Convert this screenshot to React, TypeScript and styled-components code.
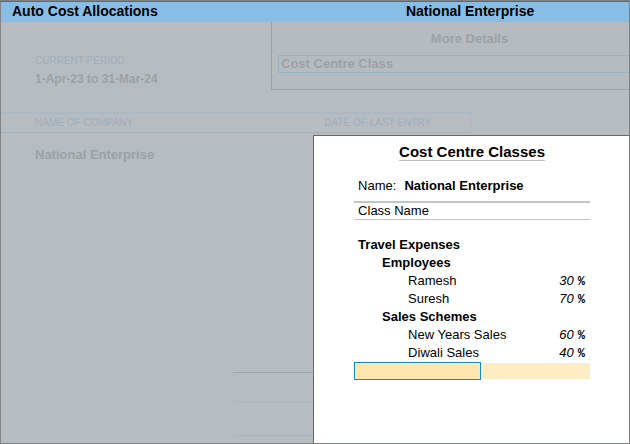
import React from "react";
import styled, { createGlobalStyle } from "styled-components";

const GlobalStyle = createGlobalStyle`
  *, *::before, *::after { box-sizing: border-box; }
  body { margin: 0; background: #b6bbbf; }
  h1, h2, h3, p, dl, dt, dd { margin: 0; font: inherit; }
`;

const Frame = styled.div`
  display: flex;
  flex-direction: column;
  min-height: 100vh;
  border: 1px solid #808284;
  background: #b6bcc0;
  color: #000;
  font-family: "Liberation Sans", Arial, sans-serif;
  font-size: 13px;
  line-height: 18px;
`;

const TitleBar = styled.header`
  display: flex;
  align-items: center;
  height: 21px;
  padding: 0 11px 2px;
  border-top: 1px solid #3c6fa6;
  background: #88bee6;
  font-size: 14px;
  font-weight: bold;
`;

const ScreenName = styled.h1`
  width: 65%;
`;

const CompanyName = styled.p`
  flex: 1;
`;

const Workspace = styled.main`
  position: relative;
  flex: 1;
`;

const Gateway = styled.section`
  width: 75%;
`;

const Faded = styled.p`
  color: #9ca1a5;
  font-weight: bold;
`;

const Period = styled.div`
  height: 92px;
  padding: 30px 34px 0;
  border-bottom: 2px solid #a9bac6;
`;

const Caption = styled.span`
  display: block;
  color: #a0afbc;
  font-size: 10px;
`;

const PeriodValue = styled(Faded)`
  font-size: 12px;
`;

const Columns = styled.div`
  display: flex;
  justify-content: space-between;
  padding: 0 40px 0 34px;
  border-right: 1px solid #adb8c0;
  border-bottom: 1px solid #a5b2ba;
`;

const Company = styled(Faded)`
  padding: 13px 34px;
`;

const MenuRules = styled.div`
  position: absolute;
  left: 37%;
  bottom: 0;
  width: 13%;
`;

const Rule = styled.div<{ $height: number; $tone: string }>`
  height: ${(p) => p.$height}px;
  border-top: 1px solid ${(p) => p.$tone};
`;

const Details = styled.aside`
  position: absolute;
  top: 0;
  left: 43%;
  right: 0;
  padding: 8px 0 16px 6px;
  border-left: 1px solid #9ca4a9;
  border-bottom: 1px solid #9ca4a9;
  background: #b6bbbf;
`;

const DetailsTitle = styled(Faded)`
  padding-right: 40px;
  padding-left: 72px;
  text-align: center;
`;

const DetailsChoice = styled.button`
  display: block;
  width: 100%;
  height: 18px;
  margin-top: 7px;
  padding: 0 2px;
  border: 1px solid #9bb3c3;
  border-right: 0;
  background: transparent;
  color: #9ca1a5;
  font: bold 13px/16px "Liberation Sans", Arial, sans-serif;
  text-align: left;
`;

const Dialog = styled.section`
  position: absolute;
  top: 113px;
  right: 0;
  bottom: 0;
  left: 49.7%;
  padding: 8px 39px 0 40px;
  border-top: 1px solid #66696b;
  border-left: 1px solid #66696b;
  background: #fff;
`;

const DialogTitle = styled.h2`
  width: fit-content;
  margin: 0 auto;
  border-bottom: 1px solid #bcbcbc;
  font-size: 15px;
  font-weight: bold;
  line-height: 16px;
`;

const NameRow = styled.dl`
  display: flex;
  gap: 8px;
  padding: 16px 4px 6px;
`;

const NameLabel = styled.dt``;

const NameValue = styled.dd`
  font-weight: bold;
`;

const ClassTable = styled.table`
  width: 100%;
  border-collapse: separate;
  border-spacing: 0;
`;

const HeadCell = styled.th`
  height: 19px;
  padding: 0 4px;
  border-top: 2px solid #c4c4c4;
  border-bottom: 1px solid #c4c4c4;
  font-weight: normal;
  line-height: 16px;
  text-align: left;
`;

const Gap = styled.td`
  height: 16px;
  padding: 0;
`;

const NameCell = styled.td<{ $level: number }>`
  height: 18px;
  padding: 0 0 0 ${(p) => [4, 28, 54][p.$level]}px;
  font-weight: ${(p) => (p.$level < 2 ? "bold" : "normal")};
  white-space: nowrap;
`;

const ShareCell = styled.td`
  padding: 0 5px 0 0;
  font-style: italic;
  text-align: right;
`;

const Percent = styled.span`
  margin-left: 4px;
  font-family: "Liberation Mono", monospace;
  font-size: 12px;
  font-style: normal;
  font-weight: bold;
  line-height: 1;
`;

const EntryCell = styled.td`
  padding: 0;
`;

const Entry = styled.div`
  display: flex;
  align-items: center;
  height: 18px;
`;

const EntryInput = styled.input`
  width: 54%;
  height: 18px;
  padding: 0 3px;
  border: 1px solid #1689cb;
  border-radius: 0;
  outline: 0;
  background: #ffe6ae;
  font: inherit;
`;

const EntryRest = styled.div`
  flex: 1;
  height: 16px;
  background: #feecc2;
`;

const rows: { name: string; level: number; share?: number }[] = [
  { name: "Travel Expenses", level: 0 },
  { name: "Employees", level: 1 },
  { name: "Ramesh", level: 2, share: 30 },
  { name: "Suresh", level: 2, share: 70 },
  { name: "Sales Schemes", level: 1 },
  { name: "New Years Sales", level: 2, share: 60 },
  { name: "Diwali Sales", level: 2, share: 40 },
];

export default function App() {
  return (
    <>
      <GlobalStyle />
      <Frame>
        <TitleBar>
          <ScreenName>Auto Cost Allocations</ScreenName>
          <CompanyName>National Enterprise</CompanyName>
        </TitleBar>
        <Workspace>
          <Gateway>
            <Period>
              <Caption>CURRENT PERIOD</Caption>
              <PeriodValue>1-Apr-23 to 31-Mar-24</PeriodValue>
            </Period>
            <Columns>
              <Caption>NAME OF COMPANY</Caption>
              <Caption>DATE OF LAST ENTRY</Caption>
            </Columns>
            <Company>National Enterprise</Company>
          </Gateway>
          <MenuRules>
            <Rule $height={29} $tone="#a0a6aa" />
            <Rule $height={34} $tone="#b0b6ba" />
            <Rule $height={8} $tone="#b0b6ba" />
          </MenuRules>
          <Details>
            <DetailsTitle>More Details</DetailsTitle>
            <DetailsChoice type="button">Cost Centre Class</DetailsChoice>
          </Details>
          <Dialog role="dialog" aria-labelledby="classes-title">
            <DialogTitle id="classes-title">Cost Centre Classes</DialogTitle>
            <NameRow>
              <NameLabel>Name:</NameLabel>
              <NameValue>National Enterprise</NameValue>
            </NameRow>
            <ClassTable>
              <thead>
                <tr>
                  <HeadCell colSpan={2} id="class-name">
                    Class Name
                  </HeadCell>
                </tr>
              </thead>
              <tbody>
                <tr>
                  <Gap colSpan={2} />
                </tr>
                {rows.map((row) => (
                  <tr key={row.name}>
                    <NameCell $level={row.level}>{row.name}</NameCell>
                    <ShareCell>
                      {row.share !== undefined && (
                        <>
                          {row.share}
                          <Percent>%</Percent>
                        </>
                      )}
                    </ShareCell>
                  </tr>
                ))}
                <tr>
                  <EntryCell colSpan={2}>
                    <Entry>
                      <EntryInput type="text" aria-labelledby="class-name" />
                      <EntryRest />
                    </Entry>
                  </EntryCell>
                </tr>
              </tbody>
            </ClassTable>
          </Dialog>
        </Workspace>
      </Frame>
    </>
  );
}
